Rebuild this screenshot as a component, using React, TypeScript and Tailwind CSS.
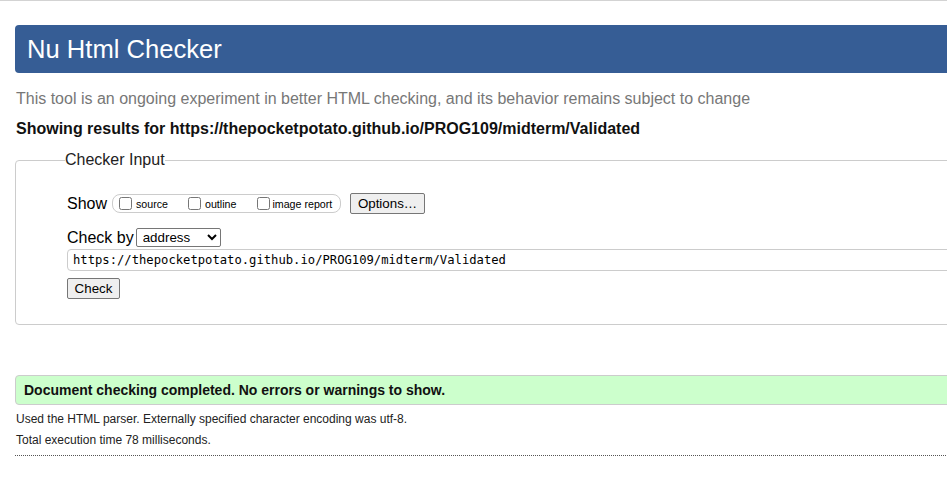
export default function App() {
  const url = "https://thepocketpotato.github.io/PROG109/midterm/Validated";

  return (
    <div className="min-h-screen overflow-hidden border-t border-[#d3d3d3] bg-white font-['Liberation_Sans',Arial,sans-serif] text-black">
      <div className="w-[1100px] pl-[15px] pt-[24px]">
        {/* Title bar */}
        <h1 className="flex h-[48px] items-center rounded-l-[4px] bg-[#365d95] pl-[12px] text-[25.6px] font-normal text-white">
          Nu Html Checker
        </h1>

        <p className="mt-[17px] pl-px text-[16px] leading-[18px] text-[#777]">
          This tool is an ongoing experiment in better HTML checking, and its behavior remains subject to change
        </p>
        <p className="mt-[12px] pl-px text-[16px] font-bold leading-[18px] text-[#111]">
          Showing results for {url}
        </p>

        {/* Checker input */}
        <fieldset className="mt-[13px] h-[174px] rounded-[4px] border border-[#ccc]">
          <legend className="ml-[49px] text-[16px] leading-[18px] text-[#222]">Checker Input</legend>

          <div className="ml-[51px] mt-[24px] flex items-center">
            <span className="text-[16px] leading-[18px]">Show</span>
            <div className="ml-[5px] flex h-[19px] w-[229px] items-center rounded-[8px] border border-[#ccc] pl-[6px] text-[10.67px]">
              <label className="flex items-center">
                <input type="checkbox" className="m-0 h-[13px] w-[13px]" />
                <span className="ml-[4px]">source</span>
              </label>
              <label className="ml-[20px] flex items-center">
                <input type="checkbox" className="m-0 h-[13px] w-[13px]" />
                <span className="ml-[4px]">outline</span>
              </label>
              <label className="ml-[21px] flex items-center">
                <input type="checkbox" className="m-0 h-[13px] w-[13px]" />
                <span className="ml-[2px]">image report</span>
              </label>
            </div>
            <button className="ml-[9px] h-[21px] w-[75px] rounded-[2px] border border-[#767676] bg-[#efefef] text-[13.33px] leading-none">
              Options…
            </button>
          </div>

          <div className="ml-[51px] mt-[14px] flex items-center">
            <span className="text-[16px] leading-[18px]">Check by</span>
            <select className="ml-[2px] h-[19px] w-[85px] rounded-[2px] border border-[#767676] bg-white pl-[2px] text-[13.33px] leading-none">
              <option>address</option>
            </select>
          </div>

          <div className="ml-[51px] mt-[2px] flex h-[22px] items-center rounded-l-[4px] border border-[#ccc] pl-[5px] font-['DejaVu_Sans_Mono',monospace] text-[12.2px]">
            {url}
          </div>

          <button className="ml-[51px] mt-[7px] h-[21px] w-[53px] rounded-[2px] border border-[#767676] bg-[#efefef] text-[13.33px] leading-none">
            Check
          </button>
        </fieldset>

        {/* Result */}
        <div className="mt-[50px] flex h-[30px] items-center rounded-l-[4px] border border-[#ccc] bg-[#ccffcc] pl-[8px] text-[14px] font-bold text-[#111]">
          Document checking completed. No errors or warnings to show.
        </div>
        <p className="mt-[7px] pl-px text-[12px] leading-[14px] text-[#222]">
          Used the HTML parser. Externally specified character encoding was utf-8.
        </p>
        <p className="mt-[7px] pl-px text-[12px] leading-[14px] text-[#222]">
          Total execution time 78 milliseconds.
        </p>
        <div className="mt-[8px] border-t border-dotted border-[#555]" />
      </div>
    </div>
  );
}
